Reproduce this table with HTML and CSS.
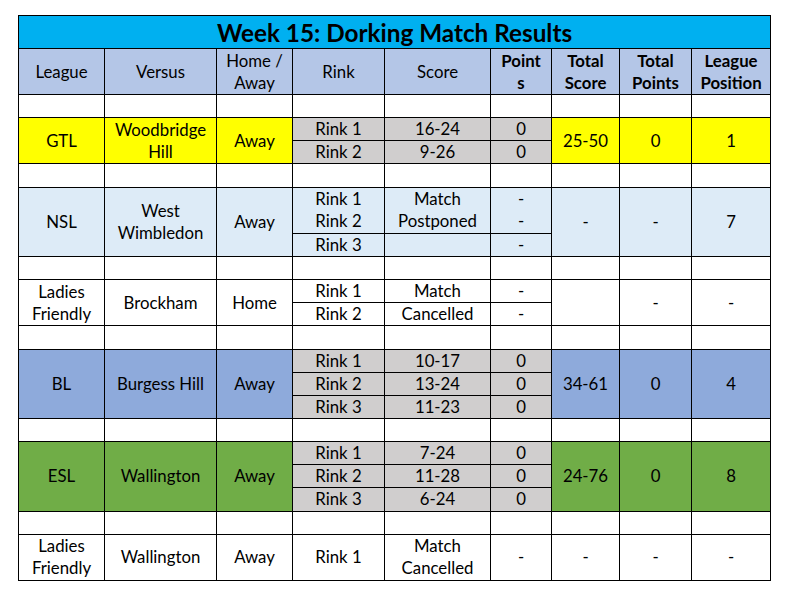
FILE: index.html
```html
<!DOCTYPE html>
<html lang="en">
<head>
<meta charset="utf-8">
<title>Week 15: Dorking Match Results</title>
<link rel="stylesheet" href="styles.css">
</head>
<body>
<div class="page">
<table class="results">
  <colgroup>
    <col class="c-league"><col class="c-versus"><col class="c-ha"><col class="c-rink"><col class="c-score"><col class="c-points"><col class="c-tscore"><col class="c-tpoints"><col class="c-pos">
  </colgroup>
  <tr class="title-row"><th colspan="9" class="title">Week 15: Dorking Match Results</th></tr>
  <tr class="head-row">
    <th>League</th><th>Versus</th><th>Home /<br>Away</th><th>Rink</th><th>Score</th>
    <th class="bold">Point<br>s</th><th class="bold">Total<br>Score</th><th class="bold">Total<br>Points</th><th class="bold">League<br>Position</th>
  </tr>
  <tr class="unit blank"><td></td><td></td><td></td><td></td><td></td><td></td><td></td><td></td><td></td></tr>

  <tr class="unit">
    <td rowspan="2" class="yellow">GTL</td><td rowspan="2" class="yellow">Woodbridge<br>Hill</td><td rowspan="2" class="yellow">Away</td>
    <td class="gray">Rink 1</td><td class="gray">16-24</td><td class="gray">0</td>
    <td rowspan="2" class="yellow">25-50</td><td rowspan="2" class="yellow">0</td><td rowspan="2" class="yellow">1</td>
  </tr>
  <tr class="unit"><td class="gray">Rink 2</td><td class="gray">9-26</td><td class="gray">0</td></tr>
  <tr class="unit blank"><td></td><td></td><td></td><td></td><td></td><td></td><td></td><td></td><td></td></tr>

  <tr class="unit">
    <td rowspan="3" class="pale">NSL</td><td rowspan="3" class="pale">West<br>Wimbledon</td><td rowspan="3" class="pale">Away</td>
    <td rowspan="2" class="pale">Rink 1<br>Rink 2</td><td rowspan="2" class="pale">Match<br>Postponed</td><td rowspan="2" class="pale">-<br>-</td>
    <td rowspan="3" class="pale">-</td><td rowspan="3" class="pale">-</td><td rowspan="3" class="pale">7</td>
  </tr>
  <tr class="unit"></tr>
  <tr class="unit"><td class="pale">Rink 3</td><td class="pale"></td><td class="pale">-</td></tr>
  <tr class="unit blank"><td></td><td></td><td></td><td></td><td></td><td></td><td></td><td></td><td></td></tr>

  <tr class="unit">
    <td rowspan="2">Ladies<br>Friendly</td><td rowspan="2">Brockham</td><td rowspan="2">Home</td>
    <td>Rink 1</td><td>Match</td><td>-</td>
    <td rowspan="2"></td><td rowspan="2">-</td><td rowspan="2">-</td>
  </tr>
  <tr class="unit"><td>Rink 2</td><td>Cancelled</td><td>-</td></tr>
  <tr class="unit blank"><td></td><td></td><td></td><td></td><td></td><td></td><td></td><td></td><td></td></tr>

  <tr class="unit">
    <td rowspan="3" class="blue">BL</td><td rowspan="3" class="blue">Burgess Hill</td><td rowspan="3" class="blue">Away</td>
    <td class="gray">Rink 1</td><td class="gray">10-17</td><td class="gray">0</td>
    <td rowspan="3" class="blue">34-61</td><td rowspan="3" class="blue">0</td><td rowspan="3" class="blue">4</td>
  </tr>
  <tr class="unit"><td class="gray">Rink 2</td><td class="gray">13-24</td><td class="gray">0</td></tr>
  <tr class="unit"><td class="gray">Rink 3</td><td class="gray">11-23</td><td class="gray">0</td></tr>
  <tr class="unit blank"><td></td><td></td><td></td><td></td><td></td><td></td><td></td><td></td><td></td></tr>

  <tr class="unit">
    <td rowspan="3" class="green">ESL</td><td rowspan="3" class="green">Wallington</td><td rowspan="3" class="green">Away</td>
    <td class="gray">Rink 1</td><td class="gray">7-24</td><td class="gray">0</td>
    <td rowspan="3" class="green">24-76</td><td rowspan="3" class="green">0</td><td rowspan="3" class="green">8</td>
  </tr>
  <tr class="unit"><td class="gray">Rink 2</td><td class="gray">11-28</td><td class="gray">0</td></tr>
  <tr class="unit"><td class="gray">Rink 3</td><td class="gray">6-24</td><td class="gray">0</td></tr>
  <tr class="unit blank"><td></td><td></td><td></td><td></td><td></td><td></td><td></td><td></td><td></td></tr>

  <tr class="double">
    <td>Ladies<br>Friendly</td><td>Wallington</td><td>Away</td><td>Rink 1</td><td>Match<br>Cancelled</td><td>-</td><td>-</td><td>-</td><td>-</td>
  </tr>
</table>
</div>
</body>
</html>
```

FILE: styles.css
```css
html, body {
  margin: 0;
  padding: 0;
  background: #ffffff;
}

.page {
  padding: 15px 0 0 18px;
}

.results {
  border-collapse: collapse;
  table-layout: fixed;
  width: 753px;
  font-family: Lato, "Open Sans", sans-serif;
  font-size: 16.8px;
  color: #000000;
}

.c-league { width: 86px; }
.c-versus { width: 112px; }
.c-ha { width: 76px; }
.c-rink { width: 92px; }
.c-score { width: 106px; }
.c-points { width: 61px; }
.c-tscore { width: 68px; }
.c-tpoints { width: 72px; }
.c-pos { width: 79px; }

.results th,
.results td {
  border: 1px solid #000000;
  padding: 0;
  text-align: center;
  vertical-align: middle;
  line-height: 22px;
  white-space: nowrap;
  overflow: hidden;
}

.results th {
  font-weight: normal;
}

.title-row { height: 33px; }

.results th.title {
  background: #00b0f0;
  font-size: 24.3px;
  font-weight: bold;
  line-height: 28px;
  padding-top: 1px;
}

.head-row { height: 46px; }

.head-row th {
  background: #b4c6e7;
}

.results th.bold {
  font-weight: bold;
}

.unit { height: 23.15px; }
.double { height: 46.3px; }

.yellow { background: #ffff00; }
.gray { background: #d0cece; }
.pale { background: #ddebf7; }
.blue { background: #8eaadb; }
.green { background: #70ad47; }
```
